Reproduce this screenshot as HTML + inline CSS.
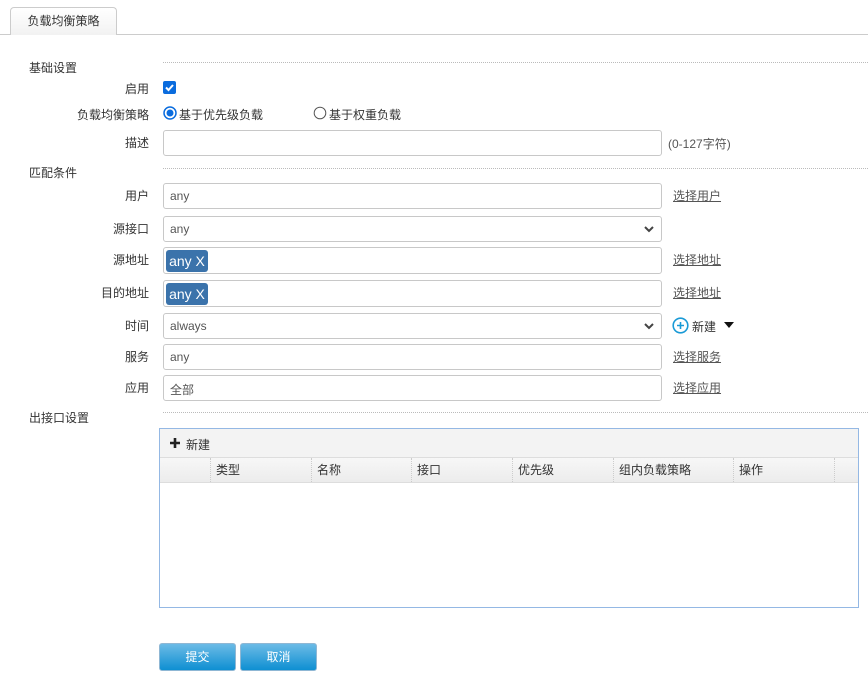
<!DOCTYPE html>
<html><head><meta charset="utf-8"><style>
body{margin:0;width:868px;height:690px;background:#fff;font-family:"Liberation Sans","Noto Sans CJK SC",sans-serif;font-size:12px;color:#333;position:relative;overflow:hidden}
.a{position:absolute}
.lab{position:absolute;right:719px;white-space:nowrap}
.in{position:absolute;left:163px;width:497px;height:24px;border:1px solid #c8c8c8;border-radius:3px;background:#fff;box-sizing:content-box}
.in span{position:absolute;left:6px;top:5px;color:#555}
.dot{position:absolute;left:163px;right:0;border-top:1px dotted #bbb}
.lnk{position:absolute;left:673px;text-decoration:underline;color:#555}
.chev{position:absolute;right:6px;top:6px}
.tag{position:absolute;left:2px;top:2px;height:22px;width:42px;background:#3b73ab;color:#fff;border-radius:3px;font-size:14px;line-height:22px;text-align:center}
.th{position:absolute;top:0;height:24px;line-height:24px;border-left:1px dotted #ccc;padding-left:5px}
.btn{position:absolute;top:643px;width:75px;height:26px;border:1px solid #8fb7d4;border-radius:3px;background:linear-gradient(#6cbbe6,#0e8fd2);color:#fff;text-align:center;line-height:26px;font-size:12px}
</style></head><body>
<div class="a" style="left:0;right:0;top:34px;border-top:1px solid #ccc"></div>
<div class="a" style="left:10px;top:7px;width:105px;height:27px;border:1px solid #ccc;border-bottom:none;border-radius:4px 4px 0 0;background:linear-gradient(#fff,#f2f2f2);text-align:center;line-height:27px;font-size:12px">负载均衡策略</div>

<div class="dot" style="top:62px"></div>
<div class="a" style="left:29px;top:59px">基础设置</div>
<div class="lab" style="top:80px">启用</div>
<div class="a" style="left:163px;top:81px;width:13px;height:13px;background:#0a6cde;border-radius:2px"><svg width="13" height="13"><path d="M3 6.5l2.5 2.5 4.5-5" stroke="#fff" stroke-width="2" fill="none"/></svg></div>
<div class="lab" style="top:106px">负载均衡策略</div>
<svg class="a" style="left:163px;top:106px" width="14" height="14"><circle cx="7" cy="7" r="6" fill="#fff" stroke="#0a6cde" stroke-width="1.5"/><circle cx="7" cy="7" r="3.5" fill="#0a6cde"/></svg>
<div class="a" style="left:179px;top:106px">基于优先级负载</div>
<svg class="a" style="left:313px;top:106px" width="14" height="14"><circle cx="7" cy="7" r="5.8" fill="#fff" stroke="#555" stroke-width="1"/></svg>
<div class="a" style="left:329px;top:106px">基于权重负载</div>
<div class="lab" style="top:134px">描述</div>
<div class="in" style="top:130px"></div>
<div class="a" style="left:668px;top:135px;color:#555">(0-127字符)</div>

<div class="dot" style="top:168px"></div>
<div class="a" style="left:29px;top:164px">匹配条件</div>
<div class="lab" style="top:187px">用户</div>
<div class="in" style="top:183px"><span>any</span></div>
<div class="lnk" style="top:187px">选择用户</div>
<div class="lab" style="top:220px">源接口</div>
<div class="in" style="top:216px"><span>any</span><svg class="chev" width="12" height="12"><path d="M2 4l4 4 4-4" stroke="#444" stroke-width="2" fill="none"/></svg></div>
<div class="lab" style="top:251px">源地址</div>
<div class="in" style="top:247px;height:25px"><div class="tag">any X</div></div>
<div class="lnk" style="top:251px">选择地址</div>
<div class="lab" style="top:284px">目的地址</div>
<div class="in" style="top:280px;height:25px"><div class="tag">any X</div></div>
<div class="lnk" style="top:284px">选择地址</div>
<div class="lab" style="top:317px">时间</div>
<div class="in" style="top:313px"><span>always</span><svg class="chev" width="12" height="12"><path d="M2 4l4 4 4-4" stroke="#444" stroke-width="2" fill="none"/></svg></div>
<svg class="a" style="left:672px;top:317px" width="17" height="17"><circle cx="8.5" cy="8.5" r="7.3" fill="none" stroke="#1a9ad6" stroke-width="1.6"/><path d="M8.5 5v7M5 8.5h7" stroke="#1a9ad6" stroke-width="1.6"/></svg>
<div class="a" style="left:692px;top:318px">新建</div>
<svg class="a" style="left:724px;top:322px" width="10" height="6"><path d="M0 0h10L5 6z" fill="#111"/></svg>
<div class="lab" style="top:348px">服务</div>
<div class="in" style="top:344px"><span>any</span></div>
<div class="lnk" style="top:348px">选择服务</div>
<div class="lab" style="top:379px">应用</div>
<div class="in" style="top:375px"><span>全部</span></div>
<div class="lnk" style="top:379px">选择应用</div>

<div class="dot" style="top:412px"></div>
<div class="a" style="left:29px;top:409px">出接口设置</div>
<div class="a" style="left:159px;top:428px;width:698px;height:178px;border:1px solid #94b8e4">
 <div class="a" style="left:0;top:0;right:0;height:28px;background:#f3f3f3;border-bottom:1px solid #ddd"></div>
 <svg class="a" style="left:9px;top:8px" width="12" height="12"><path d="M6 1v10M1 6h10" stroke="#222" stroke-width="2.6"/></svg>
 <div class="a" style="left:26px;top:7px">新建</div>
 <div class="a" style="left:0;top:29px;right:0;height:24px;background:linear-gradient(#f7f7f7,#ececec);border-bottom:1px solid #ddd">
  <div class="th" style="left:50px">类型</div>
  <div class="th" style="left:151px">名称</div>
  <div class="th" style="left:251px">接口</div>
  <div class="th" style="left:352px">优先级</div>
  <div class="th" style="left:453px">组内负载策略</div>
  <div class="th" style="left:573px">操作</div>
  <div class="th" style="left:674px"></div>
 </div>
</div>
<div class="btn" style="left:159px">提交</div>
<div class="btn" style="left:240px">取消</div>
</body></html>
